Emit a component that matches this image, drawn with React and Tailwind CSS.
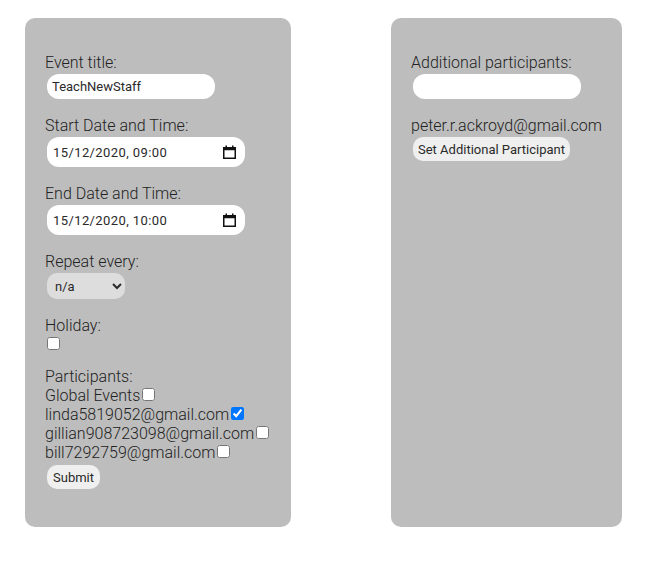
import { useState } from 'react';

const CalendarIcon = () => (
  <svg width="13" height="14" viewBox="0 0 13 14" className="shrink-0">
    <rect x="0.75" y="2.75" width="11.5" height="10.5" fill="none" stroke="#111" strokeWidth="1.5" />
    <rect x="0.75" y="2.75" width="11.5" height="2.5" fill="#111" />
    <rect x="2.5" y="0.5" width="1.5" height="3" fill="#111" />
    <rect x="9" y="0.5" width="1.5" height="3" fill="#111" />
  </svg>
);

const DateField = ({ value }) => (
  <div className="mt-[2px] ml-[2px] flex h-[30px] w-[198px] items-center rounded-[12px] bg-white pl-[6px] pr-[9px]">
    <input
      type="text"
      defaultValue={value}
      className="w-full bg-transparent text-[13px] font-normal tracking-[0.4px] text-[#2a2a2a] outline-none"
    />
    <CalendarIcon />
  </div>
);

const Field = ({ label, children }) => (
  <div className="mb-[17px]">
    <label className="block">{label}</label>
    {children}
  </div>
);

const participants = [
  { name: 'Global Events', checked: false },
  { name: 'linda5819052@gmail.com', checked: true },
  { name: 'gillian908723098@gmail.com', checked: false },
  { name: 'bill7292759@gmail.com', checked: false },
];

export default function App() {
  const [title, setTitle] = useState('TeachNewStaff');
  const [extra, setExtra] = useState('');

  return (
    <div className="flex min-h-[565px] items-start gap-[100px] bg-white pl-[25px] pt-[18px] font-['Roboto',sans-serif] text-[16px] font-light leading-[19px] text-[#222]">
      <form className="h-[509px] w-[266px] rounded-[10px] bg-[#bdbdbd] px-5 pt-[35px]" onSubmit={(e) => e.preventDefault()}>
        <Field label="Event title:">
          <input
            value={title}
            onChange={(e) => setTitle(e.target.value)}
            className="mt-[2px] ml-[2px] block h-[25px] w-[168px] rounded-[12px] bg-white px-[5px] text-[13px] font-normal text-[#2a2a2a] outline-none"
          />
        </Field>

        <Field label="Start Date and Time:">
          <DateField value="15/12/2020, 09:00" />
        </Field>

        <Field label="End Date and Time:">
          <DateField value="15/12/2020, 10:00" />
        </Field>

        <Field label="Repeat every:">
          <select className="mt-[2px] ml-[2px] block h-[26px] w-[78px] rounded-[10px] bg-[#dddddd] pl-[4px] text-[13px] font-normal text-[#2a2a2a] outline-none">
            <option>n/a</option>
            <option>day</option>
            <option>week</option>
            <option>month</option>
          </select>
        </Field>

        <Field label="Holiday:">
          <input type="checkbox" className="mt-[2px] ml-[2px] block size-[13px]" />
        </Field>

        <div>
          <div>Participants:</div>
          {participants.map((p) => (
            <div key={p.name}>
              {p.name}
              <input type="checkbox" defaultChecked={p.checked} className="ml-[2px] size-[13px] align-baseline" />
            </div>
          ))}
        </div>

        <button type="submit" className="mt-[3px] ml-[2px] h-[24px] rounded-[10px] bg-[#efefef] px-[6px] text-[13px] font-normal text-[#2a2a2a]">
          Submit
        </button>
      </form>

      <div className="h-[509px] w-[231px] rounded-[10px] bg-[#bdbdbd] px-5 pt-[35px]">
        <Field label="Additional participants:">
          <input
            value={extra}
            onChange={(e) => setExtra(e.target.value)}
            className="mt-[2px] ml-[2px] block h-[25px] w-[168px] rounded-[12px] bg-white px-[5px] text-[13px] font-normal text-[#2a2a2a] outline-none"
          />
        </Field>
        <div>peter.r.ackroyd@gmail.com</div>
        <button className="mt-[2px] ml-[2px] h-[24px] rounded-[10px] bg-[#efefef] px-[5px] text-[13px] font-normal text-[#2a2a2a]">
          Set Additional Participant
        </button>
      </div>
    </div>
  );
}
